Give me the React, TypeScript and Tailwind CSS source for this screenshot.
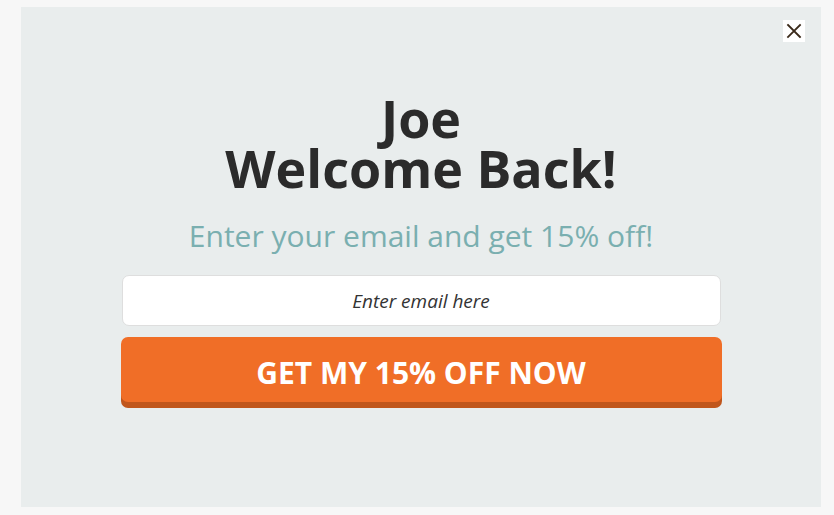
export default function App() {
  return (
    <div className="min-h-[515px] w-[834px] bg-[#f7f7f7] pt-[7px] pl-[21px]" style={{ fontFamily: '"Open Sans", sans-serif' }}>
      <div className="relative flex h-[500px] w-[800px] flex-col items-center bg-[#e9eded] pt-[86px]">
        <button className="absolute right-[16px] top-[13px] flex h-[22px] w-[22px] items-center justify-center bg-white">
          <svg width="16" height="16" viewBox="0 0 16 16" fill="none" stroke="#3a2a1a" strokeWidth="1.8" strokeLinecap="square">
            <path d="M2 2L14 14M14 2L2 14" />
          </svg>
        </button>
        <h1 className="text-center text-[52px] font-bold leading-[50px] text-[#2b2b2b]">
          Joe
          <br />
          Welcome Back!
        </h1>
        <p className="mt-[25px] text-[30px] leading-[36px] text-[#7aafb0]">Enter your email and get 15% off!</p>
        <input
          className="mt-[21px] h-[51px] w-[599px] rounded-[7px] border border-[#dedede] bg-white text-center text-[19px] italic text-[#333] outline-none placeholder:text-[#333]"
          placeholder="Enter email here"
        />
        <button className="mt-[11px] h-[65px] w-[601px] rounded-[7px] bg-[#f06e27] pt-[7px] text-[30px] font-bold leading-[40px] text-white shadow-[0_6px_0_#c0561c]">
          GET MY 15% OFF NOW
        </button>
      </div>
    </div>
  );
}
